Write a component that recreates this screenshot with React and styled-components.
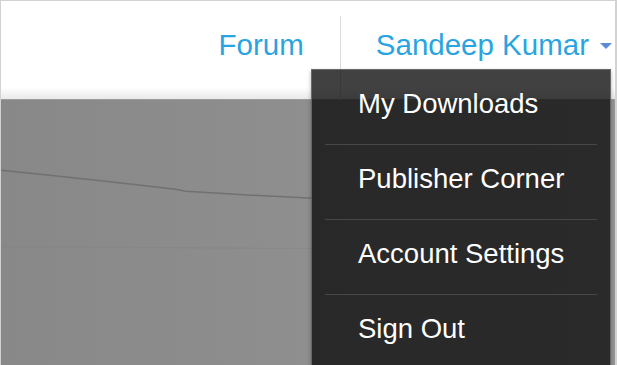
import React from 'react';
import styled, { createGlobalStyle } from 'styled-components';

const GlobalStyle = createGlobalStyle`
  html, body {
    margin: 0;
    padding: 0;
    background: #ffffff;
  }
  * {
    box-sizing: border-box;
  }
`;

const menuItems = ['My Downloads', 'Publisher Corner', 'Account Settings', 'Sign Out'];

const App = () => {
  return (
    <>
      <GlobalStyle />
      <Frame>
        <Header>
          <Nav>
            <NavLink>Forum</NavLink>
            <Divider />
            <UserToggle>
              Sandeep Kumar
              <Caret />
            </UserToggle>
          </Nav>
          <Dropdown>
            {menuItems.map((item, i) => (
              <MenuItem key={item} last={i === menuItems.length - 1}>
                {item}
              </MenuItem>
            ))}
          </Dropdown>
        </Header>
        <Banner>
          <svg width="100%" height="100%" viewBox="0 0 615 264" preserveAspectRatio="none">
            <path d="M0 70 Q90 79 175 89 L185 91 Q250 95 312 98" stroke="#6c6c6c" strokeWidth="1.5" fill="none" opacity="0.85" />
            <path d="M0 146 L312 148" stroke="#808080" strokeWidth="1" fill="none" opacity="0.4" />
          </svg>
        </Banner>
      </Frame>
    </>
  );
};

export default App;

const Frame = styled.div`
  width: 617px;
  height: 365px;
  border: 1px solid #d2d2d2;
  border-right-width: 2px;
  border-bottom: none;
  display: flex;
  flex-direction: column;
  overflow: hidden;
  font-family: "Liberation Sans", Arial, sans-serif;
`;

const Header = styled.div`
  position: relative;
  height: 99px;
  flex-shrink: 0;
  display: flex;
  justify-content: flex-end;
  padding: 15px 3px 0 0;
  background: linear-gradient(to bottom, #ffffff 0, #ffffff 86px, #e9e9e9 98px);
  border-bottom: 1px solid #9c9c9c;
  z-index: 2;
`;

const Nav = styled.div`
  display: flex;
  align-items: flex-start;
  height: 84px;
`;

const NavLink = styled.a`
  font-size: 29.5px;
  line-height: 30px;
  padding-top: 14px;
  color: #2aa4e0;
  cursor: pointer;
`;

const Divider = styled.div`
  width: 1px;
  height: 84px;
  background: #dcdcdc;
  margin: 0 35px 0 36px;
`;

const UserToggle = styled.a`
  display: flex;
  align-items: center;
  font-size: 29.5px;
  line-height: 30px;
  padding-top: 14px;
  color: #2aa4e0;
  cursor: pointer;
`;

const Caret = styled.span`
  width: 0;
  height: 0;
  margin-left: 11px;
  margin-top: 2px;
  border-left: 6px solid transparent;
  border-right: 6px solid transparent;
  border-top: 6px solid #5a8bd9;
`;

const Dropdown = styled.ul`
  position: absolute;
  top: 68px;
  right: 4px;
  width: 300px;
  height: 310px;
  margin: 0;
  padding: 0 13px;
  list-style: none;
  background: rgba(12, 12, 12, 0.78);
  border: 1px solid rgba(110, 110, 110, 0.9);
  box-shadow: 0 2px 4px rgba(0, 0, 0, 0.3);
`;

const MenuItem = styled.li`
  height: 75px;
  padding: 20px 0 0 33px;
  font-size: 27.5px;
  line-height: 27px;
  color: #ffffff;
  border-bottom: ${(p) => (p.last ? 'none' : '1px solid #474747')};
  cursor: pointer;
`;

const Banner = styled.div`
  flex: 1;
  background: linear-gradient(to right, #888888 0, #8e8e8e 45%, #969696 100%);
  z-index: 1;

  svg {
    display: block;
  }
`;
